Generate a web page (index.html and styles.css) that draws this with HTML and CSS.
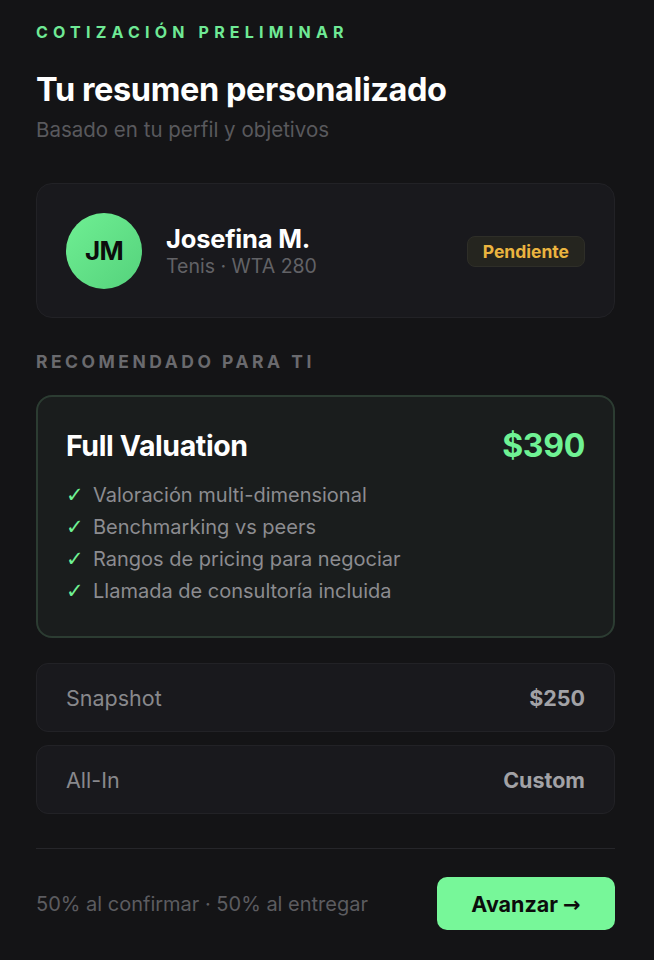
FILE: index.html
```html
<!DOCTYPE html>
<html lang="es">
  <head>
    <meta charset="UTF-8" />
    <meta name="viewport" content="width=device-width, initial-scale=1.0" />
    <title>Cotización preliminar</title>
    <link rel="stylesheet" href="styles.css">
  </head>
  <body>
    <div class="page">
      <div class="eyebrow">Cotización preliminar</div>
      <h1>Tu resumen personalizado</h1>
      <p class="subtitle">Basado en tu perfil y objetivos</p>

      <!-- Perfil -->
      <div class="profile">
        <div class="avatar">JM</div>
        <div class="profile-info">
          <div class="profile-name">Josefina M.</div>
          <div class="profile-meta">Tenis · WTA 280</div>
        </div>
        <span class="badge">Pendiente</span>
      </div>

      <div class="section-label">Recomendado para ti</div>

      <div class="plan-main">
        <div class="plan-head">
          <span class="plan-title">Full Valuation</span>
          <span class="plan-price">$390</span>
        </div>
        <ul class="features">
          <li><span class="check">✓</span>Valoración multi-dimensional</li>
          <li><span class="check">✓</span>Benchmarking vs peers</li>
          <li><span class="check">✓</span>Rangos de pricing para negociar</li>
          <li><span class="check">✓</span>Llamada de consultoría incluida</li>
        </ul>
      </div>

      <div class="plan-row">
        <span>Snapshot</span>
        <strong>$250</strong>
      </div>
      <div class="plan-row">
        <span>All-In</span>
        <strong>Custom</strong>
      </div>

      <div class="footer">
        <span class="terms">50% al confirmar · 50% al entregar</span>
        <button class="btn">Avanzar <span class="arrow">→</span></button>
      </div>
    </div>
  </body>
</html>
```

FILE: styles.css
```css
/* General styling */
body {
  font-family: Inter, "Noto Sans", sans-serif;
  background-color: #141416;
  color: #fff;
  margin: 0;
}

.page {
  padding: 22px 39px 0 36px;
}

.eyebrow {
  color: #6fe995;
  font-size: 16px;
  font-weight: 700;
  letter-spacing: 5.2px;
  text-transform: uppercase;
  line-height: 20px;
}

h1 {
  font-size: 32.5px;
  font-weight: 700;
  letter-spacing: -0.4px;
  margin: 28px 0 0;
  line-height: 40px;
}

.subtitle {
  color: #59595d;
  font-size: 20.5px;
  margin: 6px 0 0;
  line-height: 28px;
}

/* Profile card */
.profile {
  margin-top: 39px;
  height: 135px;
  box-sizing: border-box;
  padding: 0 29px;
  display: flex;
  align-items: center;
  background-color: #19191d;
  border: 1px solid #222226;
  border-radius: 16px;
}

.avatar {
  width: 76px;
  height: 76px;
  border-radius: 50%;
  background: linear-gradient(135deg, #6fef93, #55d27c);
  color: #0c0c0c;
  font-size: 26px;
  font-weight: 700;
  display: flex;
  align-items: center;
  justify-content: center;
  letter-spacing: -0.8px;
}

.profile-info {
  flex: 1;
  margin-left: 24px;
}

.profile-name {
  font-size: 25.5px;
  font-weight: 700;
  line-height: 30px;
  letter-spacing: -0.2px;
}

.profile-meta {
  color: #626266;
  font-size: 19.5px;
  line-height: 24px;
}

.badge {
  color: #ebb43f;
  font-size: 17.5px;
  font-weight: 700;
  background-color: #25251f;
  border: 1px solid #2e2e28;
  border-radius: 8px;
  padding: 4px 15px;
  margin-top: 1px;
}

.section-label {
  color: #6a6a6e;
  font-size: 17.5px;
  font-weight: 700;
  letter-spacing: 3.5px;
  text-transform: uppercase;
  margin-top: 33px;
  line-height: 22px;
}

/* Featured plan */
.plan-main {
  margin-top: 22px;
  background-color: #1a1d1d;
  border: 2px solid #2c3c32;
  border-radius: 16px;
  padding: 28px 28px 29px;
}

.plan-head {
  display: flex;
  justify-content: space-between;
  align-items: center;
  height: 40px;
}

.plan-title {
  font-size: 28.5px;
  font-weight: 700;
  letter-spacing: -0.4px;
}

.plan-price {
  color: #6ff294;
  font-size: 32px;
  font-weight: 700;
  letter-spacing: -0.3px;
}

.features {
  list-style: none;
  margin: 14px 0 0;
  padding: 0;
}

.features li {
  color: #8c8c90;
  font-size: 20px;
  line-height: 32px;
  height: 32px;
}

.check {
  color: #6ff294;
  display: inline-block;
  width: 27px;
  font-family: "DejaVu Sans", sans-serif;
  font-size: 21px;
  font-weight: 700;
  line-height: 0;
}

/* Other plans */
.plan-row {
  margin-top: 13px;
  height: 69px;
  box-sizing: border-box;
  display: flex;
  align-items: center;
  justify-content: space-between;
  padding: 0 29px;
  background-color: #19191d;
  border: 1px solid #222226;
  border-radius: 12px;
  font-size: 21.5px;
}

.plan-main + .plan-row {
  margin-top: 25px;
}

.plan-row span {
  color: #88888c;
}

.plan-row strong {
  color: #a2a2a6;
  font-weight: 700;
}

/* Footer */
.footer {
  margin-top: 34px;
  border-top: 1px solid #26262a;
  padding-top: 28px;
  display: flex;
  align-items: center;
  justify-content: space-between;
}

.terms {
  color: #5c5c60;
  font-size: 20px;
}

.btn {
  font-family: inherit;
  background-color: #77f799;
  color: #0c0c0c;
  border: none;
  border-radius: 10px;
  width: 178px;
  height: 53px;
  font-size: 21.5px;
  font-weight: 700;
}

.arrow {
  font-family: "DejaVu Sans", sans-serif;
  font-weight: 700;
  font-size: 21px;
}
```
